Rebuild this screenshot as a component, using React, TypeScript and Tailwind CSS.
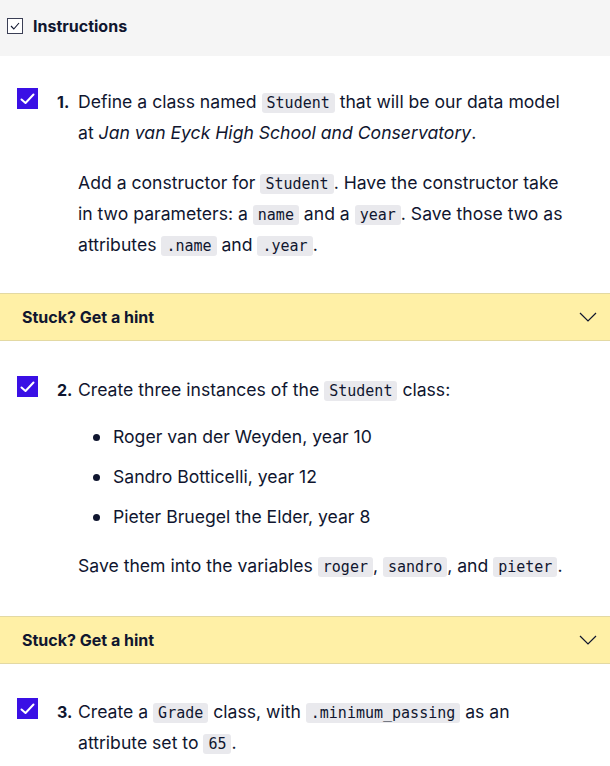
import React from "react";

const Code = ({ children }: { children: React.ReactNode }) => (
  <code className="rounded-[3px] bg-[#e9e9ed] px-[5px] py-[1px] font-['DejaVu_Sans_Mono',monospace] text-[15px] text-[#10162f]">
    {children}
  </code>
);

const Check = () => (
  <div className="mt-[1px] flex h-[21px] w-[21px] shrink-0 items-center justify-center bg-[#3a10e5]">
    <svg width="15" height="12" viewBox="0 0 15 12" fill="none">
      <path d="M1.5 6.5 L5.5 10 L13.5 1.5" stroke="white" strokeWidth="2" strokeLinecap="round" strokeLinejoin="round" />
    </svg>
  </div>
);

const Hint = () => (
  <div className="flex h-[48px] items-center justify-between border-y border-[#e3d9a3] bg-[#fff0a6] pl-[22px] pr-[13px]">
    <span className="text-[16px] font-bold text-[#10162f]">Stuck? Get a hint</span>
    <svg width="18" height="10" viewBox="0 0 18 10" fill="none">
      <path d="M1 1 L9 9 L17 1" stroke="#10162f" strokeWidth="1.2" />
    </svg>
  </div>
);

const Step = ({ n, pad, children }: { n: number; pad: string; children: React.ReactNode }) => (
  <div className={`flex pl-[17px] pr-[20px] ${pad}`}>
    <Check />
    <div className="flex flex-1">
      <span className="w-[40px] shrink-0 pl-[19px] text-[16px] font-bold leading-[30px]">{n}.</span>
      <div className="flex-1">{children}</div>
    </div>
  </div>
);

export default function App() {
  return (
    <div className="w-[610px] bg-white font-['Inter',sans-serif] text-[17.6px] leading-[30px] text-[#10162f]">
      <div className="flex h-[56px] items-center gap-[10px] bg-[#f5f5f5] pb-[4px] pl-[7px]">
        <div className="flex h-[16px] w-[16px] items-center justify-center border-[1.5px] border-[#3b3f55] bg-white">
          <svg width="10" height="8" viewBox="0 0 10 8" fill="none">
            <path d="M1 4 L3.8 7 L9 1" stroke="#10162f" strokeWidth="1.1" />
          </svg>
        </div>
        <span className="text-[16px] font-bold">Instructions</span>
      </div>

      <Step n={1} pad="pt-[31px] pb-[32px]">
        <p>
          Define a class named <Code>Student</Code> that will be our data model
          <br />
          at <em>Jan van Eyck High School and Conservatory</em>.
        </p>
        <p className="mt-[20px]">
          Add a constructor for <Code>Student</Code>. Have the constructor take
          <br />
          in two parameters: a <Code>name</Code> and a <Code>year</Code>. Save those two as
          <br />
          attributes <Code>.name</Code> and <Code>.year</Code>.
        </p>
      </Step>
      <Hint />

      <Step n={2} pad="pt-[34px] pb-[34px]">
        <p>
          Create three instances of the <Code>Student</Code> class:
        </p>
        <ul className="mt-[16px] flex flex-col gap-[10px] pl-[15px]">
          {["Roger van der Weyden, year 10", "Sandro Botticelli, year 12", "Pieter Bruegel the Elder, year 8"].map((t) => (
            <li key={t} className="flex items-center gap-[13px]">
              <span className="h-[7px] w-[7px] rounded-full bg-[#10162f]" />
              <span>{t}</span>
            </li>
          ))}
        </ul>
        <p className="mt-[19px]">
          Save them into the variables <Code>roger</Code>, <Code>sandro</Code>, and <Code>pieter</Code>.
        </p>
      </Step>
      <Hint />

      <Step n={3} pad="pt-[33px] pb-[32px]">
        <p>
          Create a <Code>Grade</Code> class, with <Code>.minimum_passing</Code> as an
          <br />
          attribute set to <Code>65</Code>.
        </p>
      </Step>
    </div>
  );
}
